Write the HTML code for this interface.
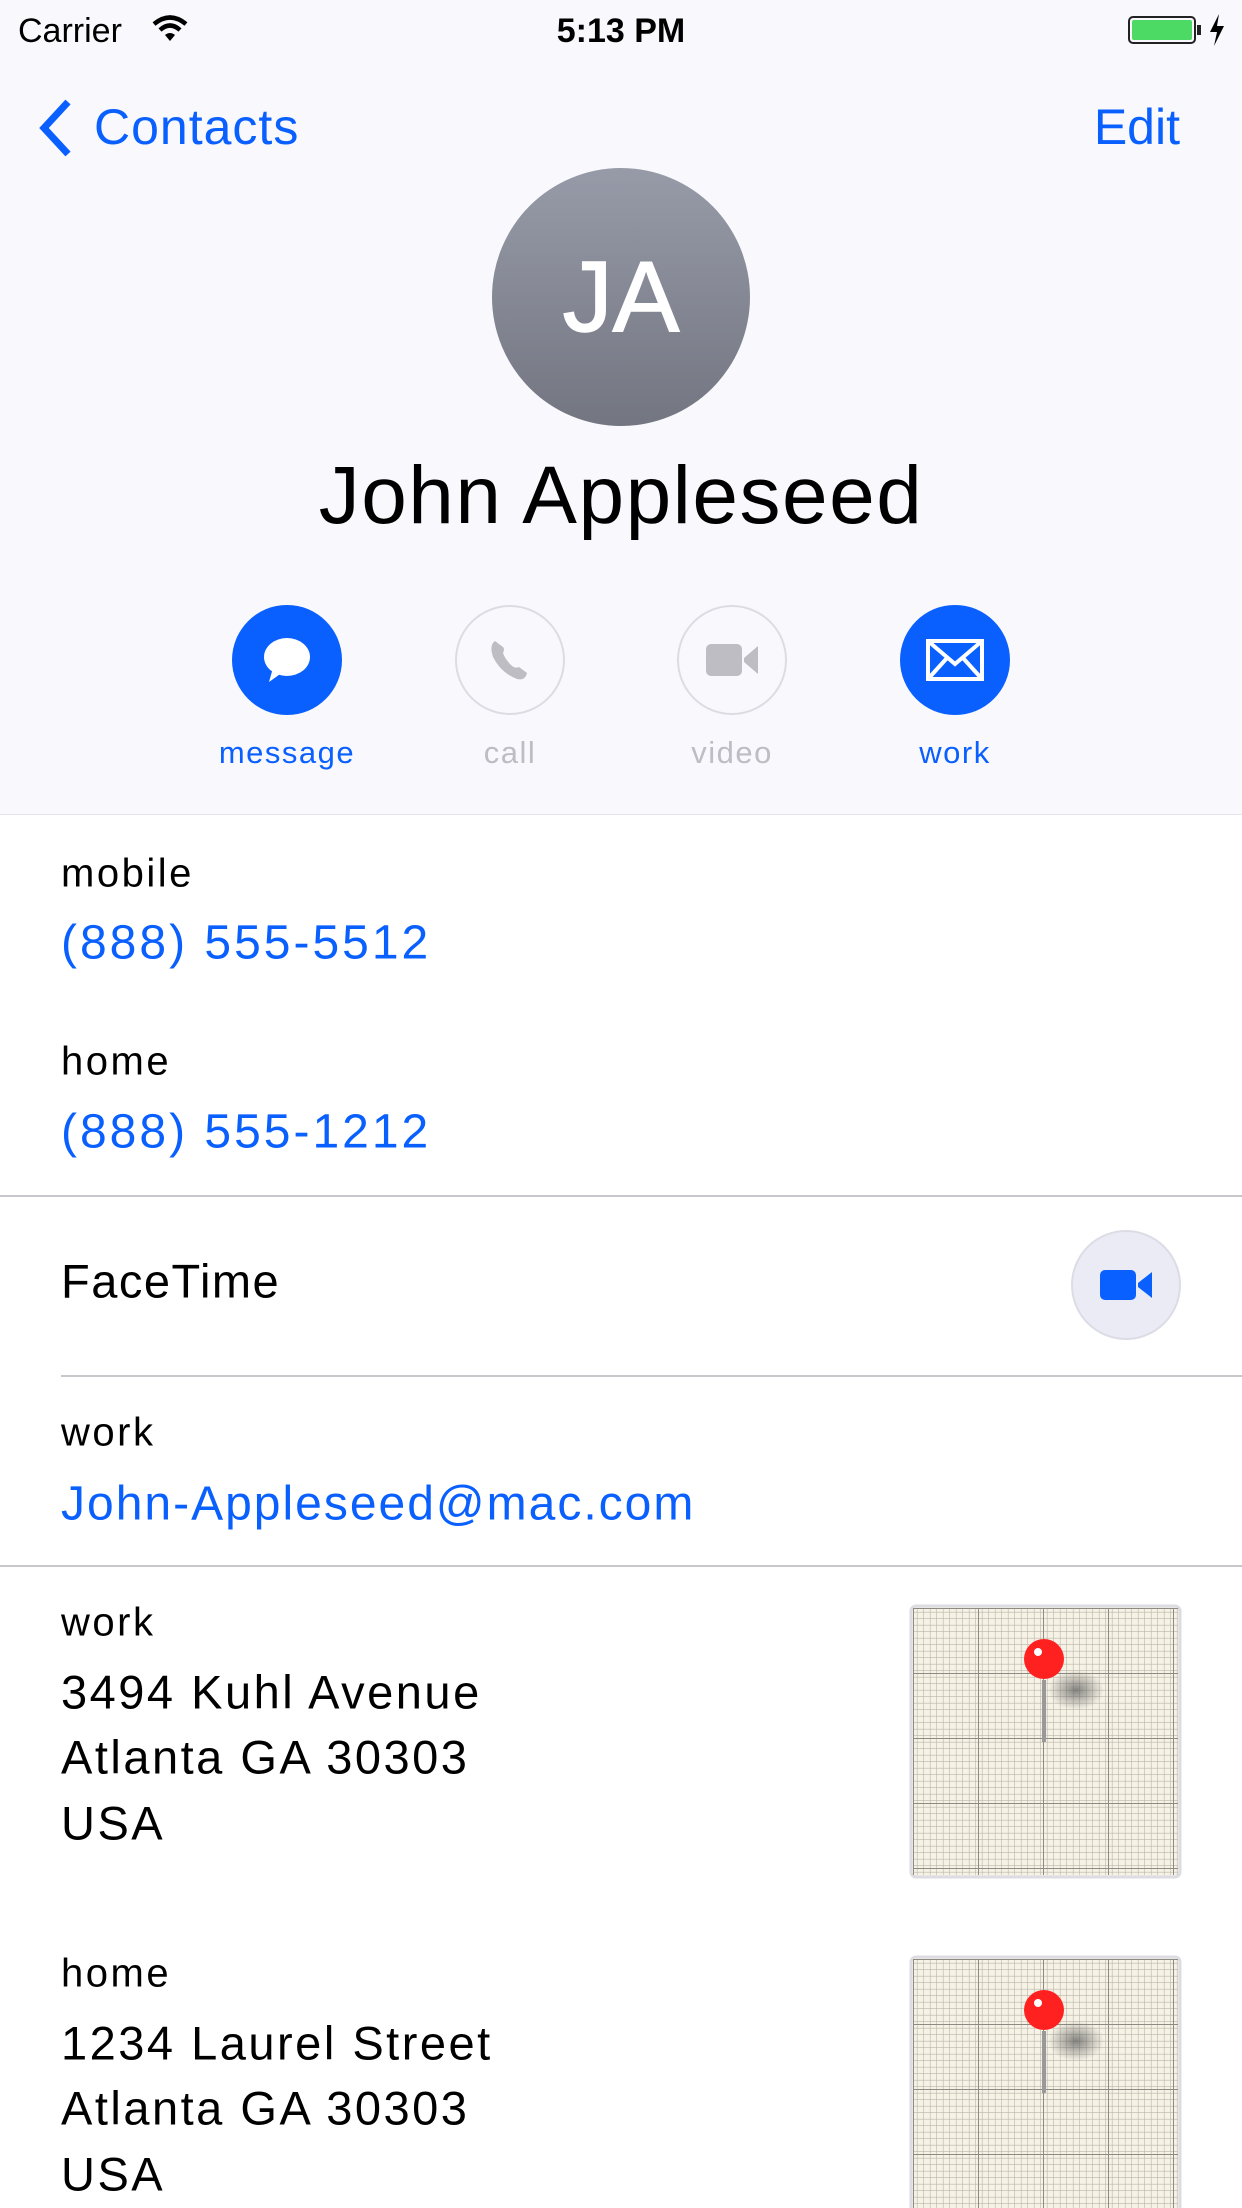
<!DOCTYPE html>
<html><head><meta charset="utf-8"><style>
*{margin:0;padding:0;box-sizing:border-box}
body{width:1242px;height:2208px;overflow:hidden;background:#fff;font-family:"Liberation Sans",sans-serif;position:relative}
.a{position:absolute;white-space:nowrap}
.hdr{position:absolute;left:0;top:0;width:1242px;height:815px;background:#f8f8fd;border-bottom:1px solid #e4e4ea}
.lbl{font-size:40px;letter-spacing:2.5px;color:#000;left:61px;transform:translateY(-50%)}
.val{font-size:48px;letter-spacing:3px;color:#0a60fe;left:61px;transform:translateY(-50%)}
.adr{font-size:47px;letter-spacing:2.5px;color:#000;left:61px;transform:translateY(-50%)}
.btn{position:absolute;width:110px;height:110px;border-radius:50%;display:flex;align-items:center;justify-content:center}
.bl{font-size:31px;letter-spacing:1.5px;transform:translate(-50%,-50%)}
.sep{position:absolute;height:2px;background:#c8c8cc}
</style></head><body>
<div class="hdr"></div>
<div class="a" style="left:18px;top:12px;font-size:34px">Carrier</div>
<svg class="a" style="left:152px;top:14px" width="36" height="28" viewBox="0 0 36 28"><path d="M2 10 Q18 -3 34 10" stroke="#000" stroke-width="4.5" fill="none"/><path d="M8 16 Q18 7 28 16" stroke="#000" stroke-width="4.5" fill="none"/><path d="M13 21 L18 27 L23 21 Q18 17 13 21Z" fill="#000"/></svg>
<div class="a" style="left:621px;top:12px;font-size:34px;font-weight:bold;transform:translateX(-50%)">5:13 PM</div>
<div class="a" style="left:1128px;top:16px;width:68px;height:28px;border:2px solid #222;border-radius:5px;padding:2px"><div style="width:100%;height:100%;background:#4cd964;border-radius:2px"></div></div>
<div class="a" style="left:1197px;top:25px;width:4px;height:10px;background:#222"></div>
<svg class="a" style="left:1208px;top:14px" width="18" height="32" viewBox="0 0 18 32"><path d="M11 0 L2 18 L9 18 L6 32 L16 12 L9 12 Z" fill="#000"/></svg>
<svg class="a" style="left:36px;top:98px" width="40" height="60" viewBox="0 0 40 60"><path d="M32 4 L8 30 L32 56" stroke="#0a60fe" stroke-width="7" fill="none"/></svg>
<div class="a" style="left:94px;top:127px;font-size:50px;letter-spacing:1px;color:#0a60fe;transform:translateY(-50%)">Contacts</div>
<div class="a" style="right:62px;top:127px;font-size:50px;color:#0a60fe;transform:translateY(-50%)">Edit</div>
<div class="a" style="left:492px;top:168px;width:258px;height:258px;border-radius:50%;background:linear-gradient(#979ba8,#737681);display:flex;align-items:center;justify-content:center;color:#fff;font-size:100px;-webkit-text-stroke:1.5px #fff">JA</div>
<div class="a" style="left:621px;top:496px;font-size:82px;letter-spacing:1.5px;transform:translate(-50%,-50%)">John Appleseed</div>
<div class="btn" style="left:232px;top:605px;background:#0a60fe"><svg width="60" height="60" viewBox="0 0 60 60"><ellipse cx="30" cy="27" rx="23" ry="19" fill="#fff"/><path d="M16 38 L12 52 L26 42Z" fill="#fff"/></svg></div>
<div class="btn" style="left:455px;top:605px;border:2px solid #dcdce2"><svg width="50" height="50" viewBox="0 0 50 50"><path d="M10 6 Q4 10 8 22 Q16 38 32 44 Q40 46 42 38 L34 32 Q30 34 26 30 Q20 24 18 18 Q20 14 18 12 Z" fill="#bdbdc3"/></svg></div>
<div class="btn" style="left:677px;top:605px;border:2px solid #dcdce2"><svg width="60" height="40" viewBox="0 0 60 40"><rect x="4" y="4" width="36" height="32" rx="5" fill="#bdbdc3"/><path d="M42 18 L56 6 L56 34 L42 22Z" fill="#bdbdc3"/></svg></div>
<div class="btn" style="left:900px;top:605px;background:#0a60fe"><svg width="60" height="44" viewBox="0 0 60 44"><rect x="3" y="3" width="54" height="38" fill="none" stroke="#fff" stroke-width="4"/><path d="M3 3 L30 26 L57 3 M3 41 L22 20 M57 41 L38 20" stroke="#fff" stroke-width="4" fill="none"/></svg></div>
<div class="a bl" style="left:287px;top:753px;color:#0a60fe">message</div>
<div class="a bl" style="left:510px;top:753px;color:#bdbdc3">call</div>
<div class="a bl" style="left:732px;top:753px;color:#bdbdc3">video</div>
<div class="a bl" style="left:955px;top:753px;color:#0a60fe">work</div>

<div class="a lbl" style="top:874px">mobile</div>
<div class="a val" style="top:943px">(888) 555-5512</div>
<div class="a lbl" style="top:1062px">home</div>
<div class="a val" style="top:1132px">(888) 555-1212</div>
<div class="sep" style="left:0;top:1195px;width:1242px"></div>
<div class="a adr" style="top:1281px;letter-spacing:1.5px">FaceTime</div>
<div class="btn" style="left:1071px;top:1230px;background:#ebebf6;border:2px solid #dcdce6"><svg width="60" height="40" viewBox="0 0 60 40"><rect x="4" y="5" width="36" height="30" rx="5" fill="#0a60fe"/><path d="M42 18 L56 7 L56 33 L42 22Z" fill="#0a60fe"/></svg></div>
<div class="sep" style="left:61px;top:1375px;width:1181px"></div>
<div class="a lbl" style="top:1433px">work</div>
<div class="a val" style="top:1504px;letter-spacing:2px">John-Appleseed@mac.com</div>
<div class="sep" style="left:0;top:1565px;width:1242px"></div>
<div class="a lbl" style="top:1623px">work</div>
<div class="a adr" style="top:1692px">3494 Kuhl Avenue</div>
<div class="a adr" style="top:1757px">Atlanta GA 30303</div>
<div class="a adr" style="top:1823px">USA</div>
<div class="a lbl" style="top:1974px">home</div>
<div class="a adr" style="top:2043px">1234 Laurel Street</div>
<div class="a adr" style="top:2108px">Atlanta GA 30303</div>
<div class="a adr" style="top:2174px">USA</div>

<svg class="a" style="left:0;top:0" width="1242" height="2208">
<defs>
<pattern id="sg" width="6.5" height="6.5" patternUnits="userSpaceOnUse" x="911" y="1606"><path d="M6.5 0 V6.5 M0 6.5 H6.5" stroke="#b9b5aa" stroke-width="1.2"/></pattern>
<pattern id="bg" width="65" height="65" patternUnits="userSpaceOnUse" x="913" y="1608"><path d="M0 0 V65 M0 0 H65" stroke="#8e8b84" stroke-width="2"/></pattern>
<pattern id="sg2" width="6.5" height="6.5" patternUnits="userSpaceOnUse" x="911" y="1957"><path d="M6.5 0 V6.5 M0 6.5 H6.5" stroke="#b9b5aa" stroke-width="1.2"/></pattern>
<pattern id="bg2" width="65" height="65" patternUnits="userSpaceOnUse" x="913" y="1959"><path d="M0 0 V65 M0 0 H65" stroke="#8e8b84" stroke-width="2"/></pattern>
<radialGradient id="sh"><stop offset="0" stop-color="#555" stop-opacity=".7"/><stop offset="1" stop-color="#555" stop-opacity="0"/></radialGradient>
</defs>
<rect x="911" y="1606" width="269" height="271" rx="5" fill="#f6f2e6" stroke="#dcdce2" stroke-width="3"/>
<rect x="913" y="1608" width="265" height="267" fill="url(#sg)"/>
<rect x="913" y="1608" width="265" height="267" fill="url(#bg)"/>
<ellipse cx="1076" cy="1690" rx="28" ry="20" fill="url(#sh)"/>
<rect x="1042" y="1680" width="4" height="62" fill="#999"/>
<circle cx="1044" cy="1659" r="20" fill="#ff2020"/><circle cx="1038" cy="1652" r="4" fill="#fff"/>
<rect x="911" y="1957" width="269" height="271" rx="5" fill="#f6f2e6" stroke="#dcdce2" stroke-width="3"/>
<rect x="913" y="1959" width="265" height="267" fill="url(#sg2)"/>
<rect x="913" y="1959" width="265" height="267" fill="url(#bg2)"/>
<ellipse cx="1076" cy="2041" rx="28" ry="20" fill="url(#sh)"/>
<rect x="1042" y="2031" width="4" height="62" fill="#999"/>
<circle cx="1044" cy="2010" r="20" fill="#ff2020"/><circle cx="1038" cy="2003" r="4" fill="#fff"/>
</svg>
</body></html>
